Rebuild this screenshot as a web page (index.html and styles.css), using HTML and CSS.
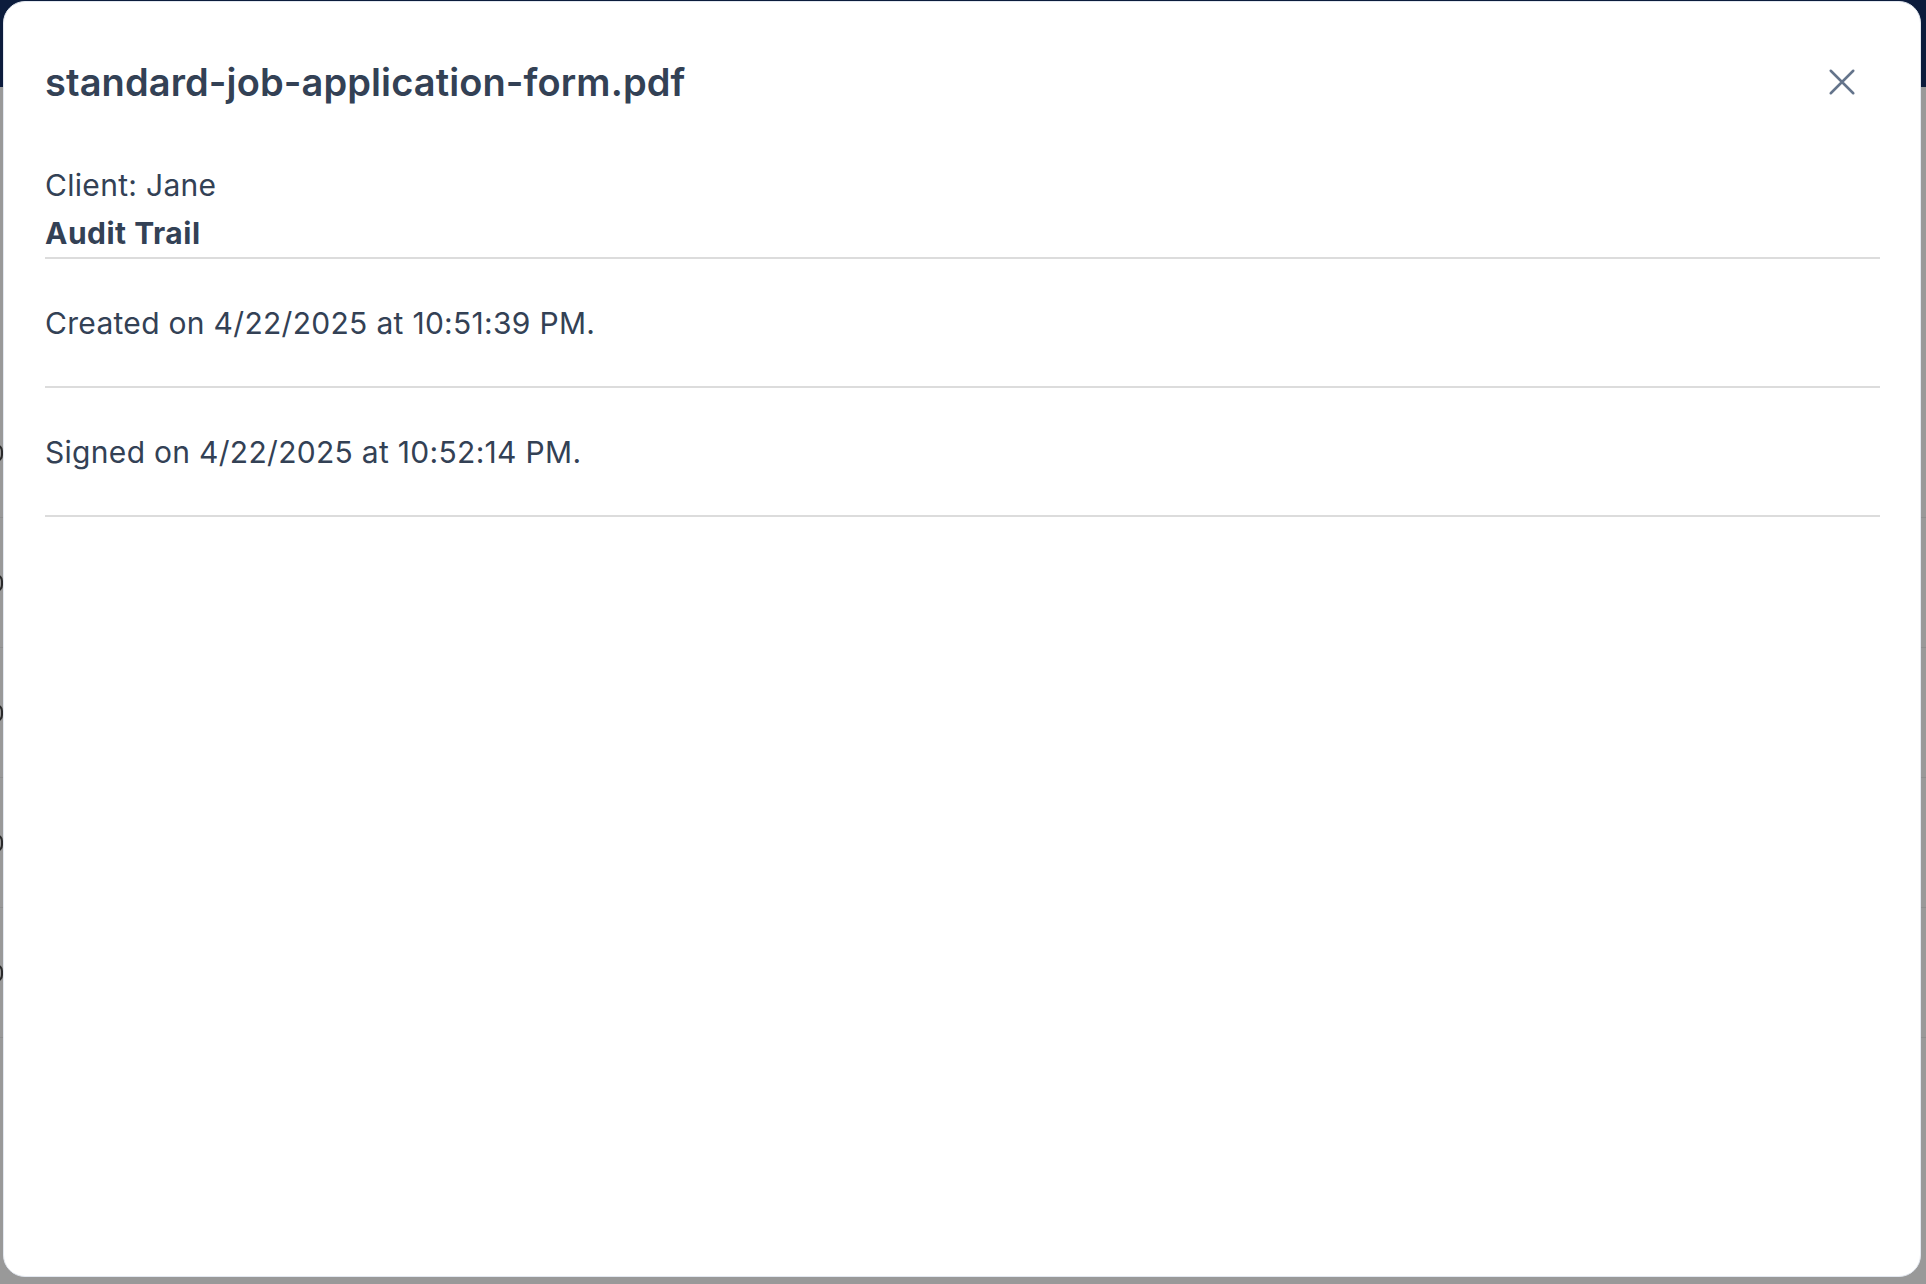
FILE: index.html
```html
<!DOCTYPE html>
<html lang="en">
<head>
<meta charset="utf-8">
<title>standard-job-application-form.pdf</title>
<link rel="stylesheet" href="styles.css">
</head>
<body>
<div class="page">
  <div class="page-header"></div>
  <div class="page-body">
    <div class="ghost-row"><span class="ghost-mark"></span></div>
    <div class="ghost-row"><span class="ghost-mark"></span></div>
    <div class="ghost-row"><span class="ghost-mark"></span></div>
    <div class="ghost-row"><span class="ghost-mark"></span></div>
    <div class="ghost-row"><span class="ghost-mark"></span></div>
  </div>
</div>
<div class="modal" role="dialog" aria-labelledby="modal-title">
  <div class="modal-head">
    <h1 id="modal-title" class="modal-title">standard-job-application-form.pdf</h1>
    <button class="close-btn" aria-label="Close">
      <svg viewBox="0 0 24 24" width="36" height="36" fill="none" stroke="currentColor" stroke-width="1.7" stroke-linecap="round"><path d="M4.5 4.5 L19.5 19.5 M19.5 4.5 L4.5 19.5"/></svg>
    </button>
  </div>
  <div class="modal-body">
    <p class="client">Client: Jane</p>
    <h2 class="section-title">Audit Trail</h2>
    <ul class="trail">
      <li class="trail-item">Created on 4/22/2025 at 10:51:39 PM.</li>
      <li class="trail-item">Signed on 4/22/2025 at 10:52:14 PM.</li>
    </ul>
  </div>
</div>
</body>
</html>
```
FILE: styles.css
```css
* { box-sizing: border-box; }
html, body { margin: 0; padding: 0; }
body {
  width: 1926px;
  height: 1284px;
  overflow: hidden;
  font-family: Inter, "Noto Sans", "Liberation Sans", sans-serif;
  background: #858585;
  position: relative;
}
.page { display: flex; flex-direction: column; height: 100%; }
.page-header { height: 87px; background: #0c1c3c; flex: none; }
.page-body {
  flex: 1;
  background: #999999;
  display: flex;
  flex-direction: column;
  padding-top: 301px;
}
.ghost-row {
  height: 130px;
  flex: none;
  border-bottom: 1px solid #8e8e8e;
  display: flex;
  align-items: center;
}
.ghost-mark {
  width: 14px;
  height: 18px;
  margin-left: -11px;
  border: 2px solid #2a2a2a;
  border-radius: 7px;
}

.modal {
  position: absolute;
  left: 3px;
  top: 1px;
  width: 1918px;
  height: 1276px;
  background: #ffffff;
  border: 1px solid #e3e8f0;
  border-radius: 22px;
  padding: 0 40px 0 41px;
  color: #334155;
}
.modal-head {
  display: flex;
  align-items: center;
  justify-content: space-between;
  height: 160px;
}
.modal-title {
  margin: 0;
  font-size: 38px;
  font-weight: 600;
  letter-spacing: 0.1px;
  color: #334155;
}
.close-btn {
  border: 0;
  background: none;
  padding: 0;
  margin-right: 20px;
  color: #64748b;
  display: flex;
  cursor: pointer;
}
.modal-body { font-size: 30px; letter-spacing: 0.3px; }
.client { margin: 3px 0 0; line-height: 40px; }
.section-title {
  margin: 8px 0 0;
  font-size: 30px;
  font-weight: 700;
  letter-spacing: 0.5px;
  line-height: 40px;
  padding-bottom: 4px;
  border-bottom: 2px solid #dcdcdc;
}
.trail { list-style: none; margin: 0; padding: 0; }
.trail-item {
  line-height: 40px;
  padding: 44px 0 43px;
  border-bottom: 2px solid #dcdcdc;
}
```
